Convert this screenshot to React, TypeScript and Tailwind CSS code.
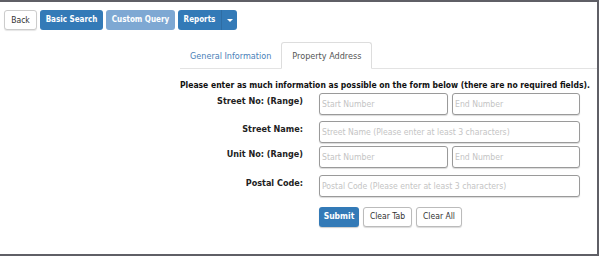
import React from "react";

const font = "font-['DejaVu_Sans_Condensed','DejaVu_Sans',Verdana,sans-serif]";

function Field({ placeholder, className = "" }: { placeholder: string; className?: string }) {
  return (
    <input
      placeholder={placeholder}
      className={`h-[22px] rounded-[3px] border border-[#9a9a9a] bg-white px-[2px] text-[8.6px] text-[#555] placeholder:text-[#c4c4c4] shadow-[0_1px_1px_rgba(0,0,0,0.15)] outline-none ${className}`}
    />
  );
}

function Row({ label, children, className = "" }: { label: string; children: React.ReactNode; className?: string }) {
  return (
    <div className={`flex h-[22px] items-center ${className}`}>
      <div className="w-[139px] whitespace-nowrap pb-[4px] pr-[16px] text-right text-[9px] font-bold text-[#222]">{label}</div>
      <div className="flex gap-[4px]">{children}</div>
    </div>
  );
}

export default function App() {
  return (
    <div className={`${font} h-[257px] w-[599px] overflow-hidden bg-white`}>
      <div className="h-[256px] w-[599px] border-t-2 border-r-2 border-b-2 border-[#5f5f66]">
        <div className="flex gap-[3px] pl-[4px] pt-[8px]">
          <button className="h-[20px] w-[33px] rounded-[3px] border border-[#ccc] bg-white text-[8.5px] text-[#333] shadow-[0_1px_1px_rgba(0,0,0,0.1)]">
            Back
          </button>
          <button className="h-[20px] w-[63px] rounded-[3px] bg-[#337ab7] text-[8px] font-bold text-white">
            Basic Search
          </button>
          <button className="h-[20px] w-[69px] rounded-[3px] bg-[#7ea8d3] text-[8px] font-bold text-white">
            Custom Query
          </button>
          <div className="flex h-[20px] overflow-hidden rounded-[3px] bg-[#337ab7] text-white">
            <span className="flex w-[43px] items-center justify-center text-[8px] font-bold">Reports</span>
            <span className="flex w-[16px] items-center justify-center border-l border-[#2e6da4]">
              <span className="h-0 w-0 border-x-[3px] border-t-[3px] border-x-transparent border-t-white" />
            </span>
          </div>
        </div>

        <div className="ml-[180px] mt-[13px]">
          <div className="flex h-[26px] items-end border-b border-[#e3e3e3]">
            <div className="flex h-[26px] items-center px-[10px] pt-[3px] text-[9px] text-[#4a7fb8]">General Information</div>
            <div className="-mb-px flex h-[27px] items-center rounded-t-[3px] border border-b-white border-[#ddd] bg-white px-[10px] pt-[3px] text-[9px] text-[#555]">
              Property Address
            </div>
          </div>
          <div className="mt-[10px] whitespace-nowrap text-[8.5px] font-bold text-[#111]">
            Please enter as much information as possible on the form below (there are no required fields).
          </div>
        </div>

        <div className="ml-[180px] mt-[1px] flex flex-col">
          <Row label="Street No: (Range)">
            <Field placeholder="Start Number" className="w-[129px]" />
            <Field placeholder="End Number" className="w-[128px]" />
          </Row>
          <Row label="Street Name:" className="mt-[6px]">
            <Field placeholder="Street Name (Please enter at least 3 characters)" className="w-[261px]" />
          </Row>
          <Row label="Unit No: (Range)" className="mt-[3px]">
            <Field placeholder="Start Number" className="w-[129px]" />
            <Field placeholder="End Number" className="w-[128px]" />
          </Row>
          <Row label="Postal Code:" className="mt-[7px]">
            <Field placeholder="Postal Code (Please enter at least 3 characters)" className="w-[261px]" />
          </Row>
          <div className="ml-[139px] mt-[10px] flex gap-[4px]">
            <button className="h-[20px] w-[40px] rounded-[3px] bg-[#337ab7] text-[8.5px] font-bold text-white shadow-[0_1px_1px_rgba(0,0,0,0.2)]">
              Submit
            </button>
            <button className="h-[20px] w-[49px] rounded-[3px] border border-[#bbb] bg-white text-[8.5px] text-[#333] shadow-[0_1px_1px_rgba(0,0,0,0.15)]">
              Clear Tab
            </button>
            <button className="h-[20px] w-[46px] rounded-[3px] border border-[#bbb] bg-white text-[8.5px] text-[#333] shadow-[0_1px_1px_rgba(0,0,0,0.15)]">
              Clear All
            </button>
          </div>
        </div>
      </div>
    </div>
  );
}
